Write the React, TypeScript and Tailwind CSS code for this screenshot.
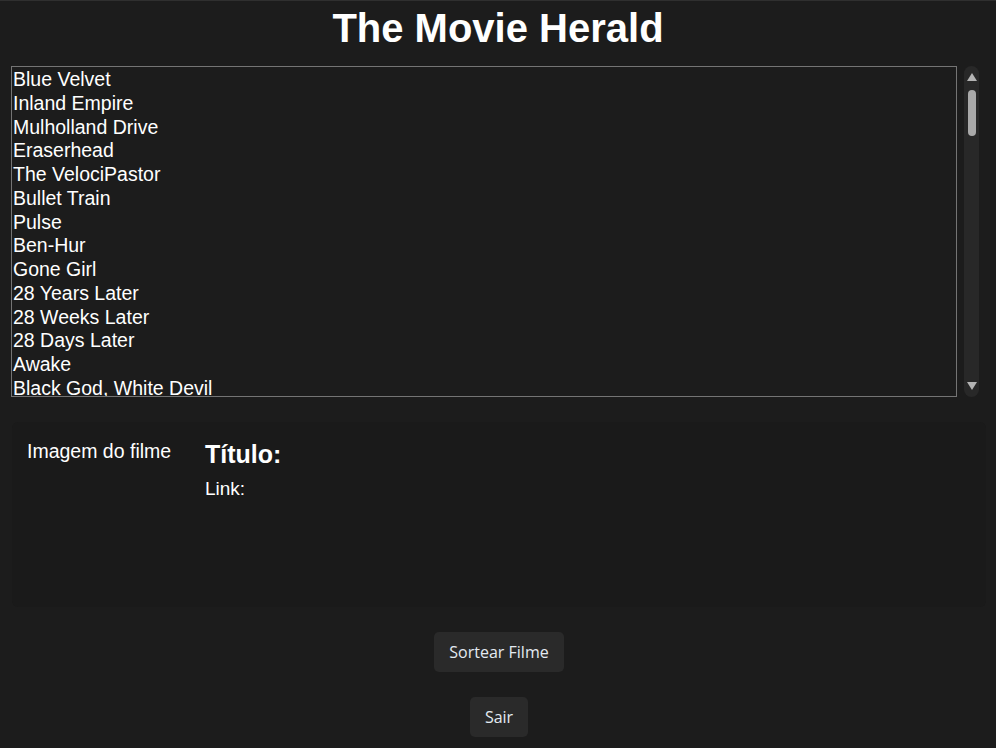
import React from 'react';

const movies = [
  'Blue Velvet',
  'Inland Empire',
  'Mulholland Drive',
  'Eraserhead',
  'The VelociPastor',
  'Bullet Train',
  'Pulse',
  'Ben-Hur',
  'Gone Girl',
  '28 Years Later',
  '28 Weeks Later',
  '28 Days Later',
  'Awake',
  'Black God, White Devil',
];

function Scrollbar() {
  return (
    <div className="w-[15px] h-[331px] rounded-full bg-[#282828] flex flex-col items-center py-[7px]">
      <svg width="10" height="8" viewBox="0 0 10 8" className="shrink-0">
        <polygon points="5,0 10,8 0,8" fill="#b4b4b4" />
      </svg>
      <div className="mt-[9px] w-[8px] h-[46px] rounded-full bg-[#a9a9a9]" />
      <div className="flex-1" />
      <svg width="10" height="8" viewBox="0 0 10 8" className="shrink-0">
        <polygon points="0,0 10,0 5,8" fill="#b4b4b4" />
      </svg>
    </div>
  );
}

export default function App() {
  return (
    <div className="w-[996px] h-[748px] bg-[#1c1c1c] border-t border-[#2f2f2f] overflow-hidden font-['Liberation_Sans',Arial,sans-serif] text-white">
      <div className="h-[65px] pt-[7px] text-center text-[40px] leading-[40px] font-bold">
        The Movie Herald
      </div>

      <div className="flex items-start pl-[11px]">
        <div className="w-[946px] h-[331px] border border-[#747474] overflow-hidden pl-[1px] pt-[1px]">
          {movies.map((m) => (
            <div key={m} className="text-[19.5px] leading-[23.77px] whitespace-nowrap">
              {m}
            </div>
          ))}
        </div>
        <div className="ml-[7px]">
          <Scrollbar />
        </div>
      </div>

      <div className="mt-[25px] ml-[12px] w-[974px] h-[185px] rounded-[6px] bg-[#1a1a1a] flex items-start pt-[17px] pl-[15px]">
        <div className="w-[178px] text-[19.5px] leading-[24px]">Imagem do filme</div>
        <div className="flex flex-col">
          <div className="text-[25px] leading-[30px] font-bold">Título:</div>
          <div className="mt-[8px] text-[19px] leading-[24px]">Link:</div>
        </div>
      </div>

      <div className="flex flex-col items-center font-['Open_Sans',sans-serif] text-[#e4eaf2]">
        <button className="mt-[25px] ml-[2px] w-[130px] h-[40px] rounded-[5px] bg-[#2a2a2a] text-[16px]">
          Sortear Filme
        </button>
        <button className="mt-[25px] ml-[2px] w-[58px] h-[40px] rounded-[5px] bg-[#2a2a2a] text-[16px]">
          Sair
        </button>
      </div>
    </div>
  );
}
